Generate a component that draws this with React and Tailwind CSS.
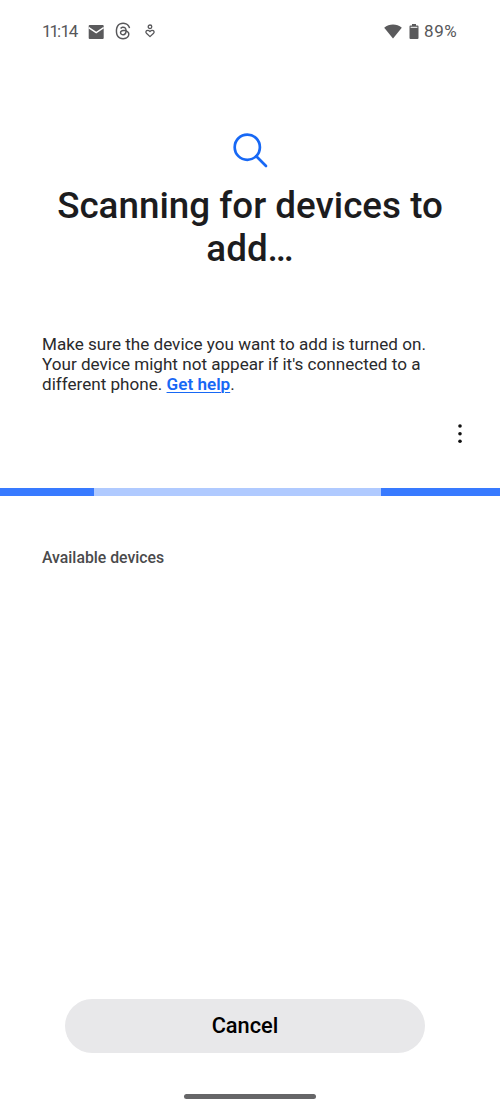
import React from "react";
import { FaThreads } from "react-icons/fa6";

export default function App() {
  return (
    <div className="flex h-[1111px] w-[500px] flex-col overflow-hidden bg-white font-['Roboto',sans-serif]">
      <StatusBar />
      <div className="mt-[71px] flex justify-center">
        <SearchIcon />
      </div>
      <h1 className="mt-[15px] text-center text-[36.8px] leading-[43px] font-medium text-[#1c1c1e]">
        Scanning for devices to
        <br />
        add…
      </h1>
      <p className="mt-[64px] pl-[42px] text-[17.1px] leading-[20px] whitespace-nowrap text-[#2a2a2c]">
        Make sure the device you want to add is turned on.
        <br />
        Your device might not appear if it's connected to a
        <br />
        different phone.{" "}
        <a
          href="#"
          className="font-semibold text-[#1768f5] underline decoration-1 underline-offset-2"
        >
          Get help
        </a>
        .
      </p>
      <div className="mt-[29px] flex justify-end pr-[37px]">
        <button aria-label="More options">
          <MoreIcon />
        </button>
      </div>
      <ProgressBar />
      <h2 className="mt-[52px] pl-[42px] text-[15.8px] leading-[20px] font-medium text-[#4a4a4c]">
        Available devices
      </h2>
      <div className="mt-auto flex flex-col">
        <button className="ml-[65px] h-[54px] w-[360px] rounded-full bg-[#e8e8ea] text-[21.8px] font-medium text-black">
          Cancel
        </button>
        <div className="mt-[41px] mb-[12px] ml-[184px] h-[5px] w-[132px] rounded-full bg-[#666668]" />
      </div>
    </div>
  );
}

function StatusBar() {
  return (
    <div className="flex h-[62px] shrink-0 items-center pr-[43px] pl-[42px] text-[17px] text-[#57575a]">
      <span className="w-[46px] pt-px whitespace-nowrap">
        <span className="tracking-[-2px]">11</span>
        <span className="tracking-[-0.8px]">:</span>
        <span className="tracking-[-1.2px]">14</span>
      </span>
      <MailIcon />
      <FaThreads className="ml-[10px] h-[18px] w-[18px]" />
      <HeartPersonIcon />
      <div className="ml-auto flex items-center">
        <WifiIcon />
        <BatteryIcon />
        <span className="w-[33px] pt-px tracking-[0.6px] whitespace-nowrap">89%</span>
      </div>
    </div>
  );
}

function ProgressBar() {
  return (
    <div className="mt-[44px] flex h-[8px] w-full shrink-0 bg-[#b0caff]">
      <div className="w-[93.5px] bg-[#387aff]" />
      <div className="ml-auto w-[119px] bg-[#387aff]" />
    </div>
  );
}

function SearchIcon() {
  return (
    <svg width="36" height="36" viewBox="0 0 36 36" fill="none" stroke="#1768f5">
      <circle cx="15.3" cy="14.2" r="12.6" strokeWidth="2.7" />
      <path d="M24.3 23.2L34 33" strokeWidth="2.7" strokeLinecap="round" />
    </svg>
  );
}

function MoreIcon() {
  return (
    <svg width="6" height="21" viewBox="0 0 6 21" fill="#111111">
      <circle cx="3" cy="3" r="1.8" />
      <circle cx="3" cy="10.7" r="1.8" />
      <circle cx="3" cy="18.3" r="1.8" />
    </svg>
  );
}

function MailIcon() {
  return (
    <svg className="mt-px" width="16" height="14" viewBox="0 0 16 14">
      <rect x=".7" width="15" height="14" rx="1" fill="#5a5a5c" />
      <path d="M.7 2.6L8.2 7.6L15.7 2.6" fill="none" stroke="white" strokeWidth="1.5" />
    </svg>
  );
}

function HeartPersonIcon() {
  return (
    <svg
      className="ml-[13px]"
      width="10"
      height="14"
      viewBox="0 0 10 14"
      fill="none"
      stroke="#57575a"
      strokeWidth="1.3"
    >
      <circle cx="5" cy="2.8" r="1.8" />
      <path
        d="M5 12.6L1.4 9.2C-.3 7.2 2.7 5 5 7.6C7.3 5 10.3 7.2 8.6 9.2Z"
        strokeLinejoin="round"
      />
    </svg>
  );
}

function WifiIcon() {
  return (
    <svg width="18" height="15" viewBox="0 0 18 15" fill="#5a5a5c">
      <path d="M9 14.5L.2 3.7C5.2-.5 12.8-.5 17.8 3.7Z" />
    </svg>
  );
}

function BatteryIcon() {
  return (
    <svg className="mr-[5px] ml-[7px]" width="10" height="15" viewBox="0 0 10 15" fill="#5a5a5c">
      <path d="M3 0H7V1.4H8.6Q9.5 1.4 9.5 2.4V14Q9.5 15 8.5 15H1.5Q.5 15 .5 14V2.4Q.5 1.4 1.4 1.4H3Z" />
      <path d="M1.6 3.3H8.4" stroke="white" strokeWidth="1" />
    </svg>
  );
}
